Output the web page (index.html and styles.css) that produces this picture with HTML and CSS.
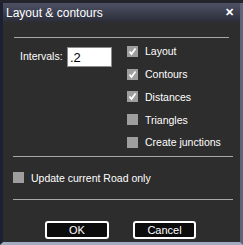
FILE: index.html
```html
<!DOCTYPE html>
<html lang="en">
<head>
    <meta charset="UTF-8">
    <title>Layout &amp; contours</title>
    <link rel="stylesheet" href="styles.css">
</head>
<body>
    <div class="desktop-strip"></div>
    <div class="window">
        <div class="titlebar">
            <span class="title">Layout &amp; contours</span>
            <span class="close">&#x2715;</span>
        </div>

        <div class="content">
            <hr class="sep sep-top">

            <div class="options">
                <div class="intervals">
                    <label for="intervals">Intervals:</label>
                    <input type="text" id="intervals" value=".2">
                </div>
                <ul class="checks">
                    <li><span class="box"><svg viewBox="0 0 11 11"><path d="M2.5 5.5 L4.5 8 L8.5 2.5" /></svg></span>Layout</li>
                    <li><span class="box"><svg viewBox="0 0 11 11"><path d="M2.5 5.5 L4.5 8 L8.5 2.5" /></svg></span>Contours</li>
                    <li><span class="box"><svg viewBox="0 0 11 11"><path d="M2.5 5.5 L4.5 8 L8.5 2.5" /></svg></span>Distances</li>
                    <li><span class="box"></span>Triangles</li>
                    <li><span class="box"></span>Create junctions</li>
                </ul>
            </div>

            <hr class="sep">

            <div class="road-only"><span class="box"></span>Update current Road only</div>

            <hr class="sep">

            <div class="buttons">
                <button class="btn-ok">OK</button>
                <button class="btn-cancel">Cancel</button>
            </div>
        </div>
    </div>
</body>
</html>
```

FILE: styles.css
```css
* {
    margin: 0;
    padding: 0;
    box-sizing: border-box;
    font-family: "Liberation Sans", Arial, sans-serif;
}

body {
    background-color: #1a1b22;
    width: 243px;
    height: 245px;
    overflow: hidden;
}

.desktop-strip {
    height: 3px;
    background-color: #22232b;
}

.window {
    height: 242px;
    display: flex;
    flex-direction: column;
    border-left: 3px solid #1d2030;
    border-right: 3px solid #5c6478;
    border-bottom: 3px solid #a3acc0;
    background-color: #2d2d2d;
}

.titlebar {
    height: 19px;
    display: flex;
    align-items: center;
    justify-content: space-between;
    padding: 0 6px 0 3px;
    background: linear-gradient(#4d5164, #2b2d38);
    color: #fff;
}

.title {
    font-size: 12px;
}

.close {
    font-size: 11px;
    font-weight: bold;
}

.content {
    flex: 1;
    padding: 15px 7px 0 10px;
    color: #fff;
    font-size: 10.5px;
}

.sep {
    border: none;
    height: 1px;
    background-color: #a8a8a8;
}

.sep-top {
    margin: 0 4px 0 1px;
}

.options {
    display: flex;
    padding: 2px 0 2px 7px;
}

.intervals {
    width: 107px;
    display: flex;
    align-items: flex-start;
    margin-top: 7px;
}

.intervals label {
    width: 47px;
    line-height: 19px;
}

.intervals input {
    width: 45px;
    height: 20px;
    border: 1px solid #8a8a8a;
    font-size: 13px;
    padding-left: 2px;
    color: #000;
}

.checks {
    list-style: none;
}

.checks li {
    height: 22.75px;
    display: flex;
    align-items: center;
}

.box {
    width: 11px;
    height: 11px;
    background-color: #9e9e9e;
    margin-right: 7px;
    display: inline-block;
}

.box svg {
    display: block;
    width: 11px;
    height: 11px;
}

.box svg path {
    fill: none;
    stroke: #fff;
    stroke-width: 1.8;
}

.road-only {
    height: 42px;
    display: flex;
    align-items: center;
}

.buttons {
    display: flex;
    gap: 24px;
    padding: 21px 0 0 32px;
}

.buttons button {
    height: 18px;
    background-color: #0c0c0c;
    border: 2px solid #fff;
    border-radius: 3px;
    color: #fff;
    font-size: 11px;
}

.btn-ok {
    width: 64px;
}

.btn-cancel {
    width: 63px;
}
```
